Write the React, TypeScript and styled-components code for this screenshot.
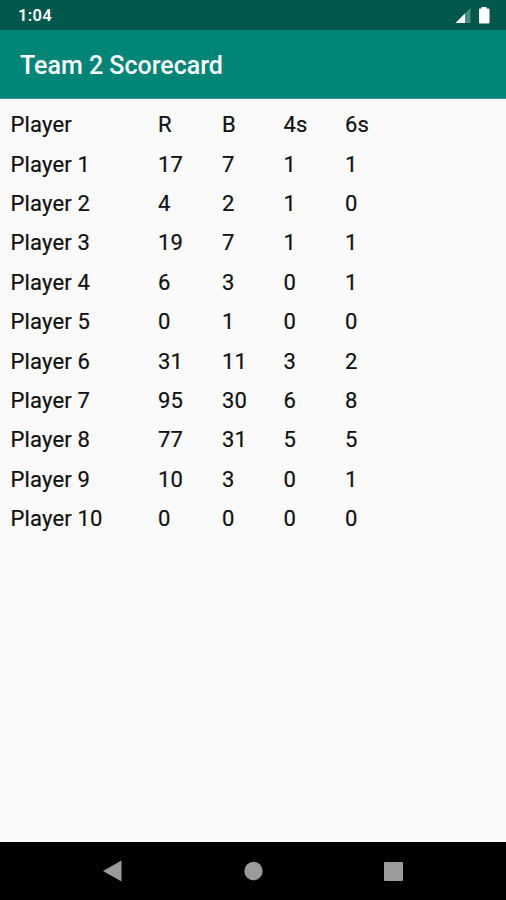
import React from 'react';
import styled, { createGlobalStyle } from 'styled-components';

const Global = createGlobalStyle`
  body { margin: 0; background: #fafafa; }
`;
const Screen = styled.div`
  width: 506px; height: 900px; display: flex; flex-direction: column;
  background: #fafafa; font-family: Roboto, sans-serif; color: #111; overflow: hidden;
`;
const StatusBar = styled.div`
  height: 30px; flex: none; background: #00574b; display: flex; align-items: center;
  justify-content: space-between; padding: 0 16px 0 18px; box-sizing: border-box;
`;
const Time = styled.span`
  color: #fff; font-size: 16.5px; font-weight: 600; line-height: 30px; letter-spacing: 0.3px; padding-top: 1px;
`;
const StatusIcons = styled.svg`
  display: block;
`;
const AppBar = styled.header`
  height: 69px; flex: none; background: #008577; display: flex; align-items: center;
  padding: 3px 20px 0; box-sizing: border-box; border-bottom: 1px solid #2b998d;
`;
const Title = styled.h1`
  margin: 0; color: #fff; font-size: 25px; line-height: 30px; font-weight: 500;
`;
const Table = styled.main`
  flex: 1; padding: 6.6px 0 0 10.5px;
`;
const Row = styled.div`
  display: grid; grid-template-columns: 147.5px 64px 61.5px 61.5px 60px; height: 39.4px; align-items: center;
`;
const Cell = styled.span`
  font-size: 22px; line-height: 26px; letter-spacing: 0.15px; -webkit-text-stroke: 0.2px #111;
`;
const NavBar = styled.nav`
  height: 58px; flex: none; background: #000;
`;

const rows = [
  ['Player', 'R', 'B', '4s', '6s'],
  ['Player 1', '17', '7', '1', '1'],
  ['Player 2', '4', '2', '1', '0'],
  ['Player 3', '19', '7', '1', '1'],
  ['Player 4', '6', '3', '0', '1'],
  ['Player 5', '0', '1', '0', '0'],
  ['Player 6', '31', '11', '3', '2'],
  ['Player 7', '95', '30', '6', '8'],
  ['Player 8', '77', '31', '5', '5'],
  ['Player 9', '10', '3', '0', '1'],
  ['Player 10', '0', '0', '0', '0'],
];

export default function App() {
  return (
    <Screen>
      <Global />
      <StatusBar>
        <Time>1:04</Time>
        <StatusIcons width="36" height="20" viewBox="454 5 36 20">
          <path d="M455.500 23L470.500 8V23Z" fill="#4a8b81" />
          <path d="M455.500 23L465 13.500V23Z" fill="#fff" />
          <path d="M479 9.500Q479 8.500 480 8.500H481.500V7H486.500V8.500H488.500Q489.500 8.500 489.500 9.500V22.500Q489.500 23.500 488.500 23.500H480Q479 23.500 479 22.500Z" fill="#fff" />
        </StatusIcons>
      </StatusBar>
      <AppBar><Title>Team 2 Scorecard</Title></AppBar>
      <Table>
        {rows.map((r) => (
          <Row key={r[0]}>{r.map((c, i) => <Cell key={i}>{c}</Cell>)}</Row>
        ))}
      </Table>
      <NavBar>
        <svg width="506" height="58" viewBox="0 842 506 58">
          <path d="M103 871L121.500 860.500V881.500Z" fill="#9b9b9b" />
          <circle cx="253.500" cy="871" r="9.200" fill="#9b9b9b" />
          <rect x="384" y="862" width="19" height="19" rx="1" fill="#9b9b9b" />
        </svg>
      </NavBar>
    </Screen>
  );
}
